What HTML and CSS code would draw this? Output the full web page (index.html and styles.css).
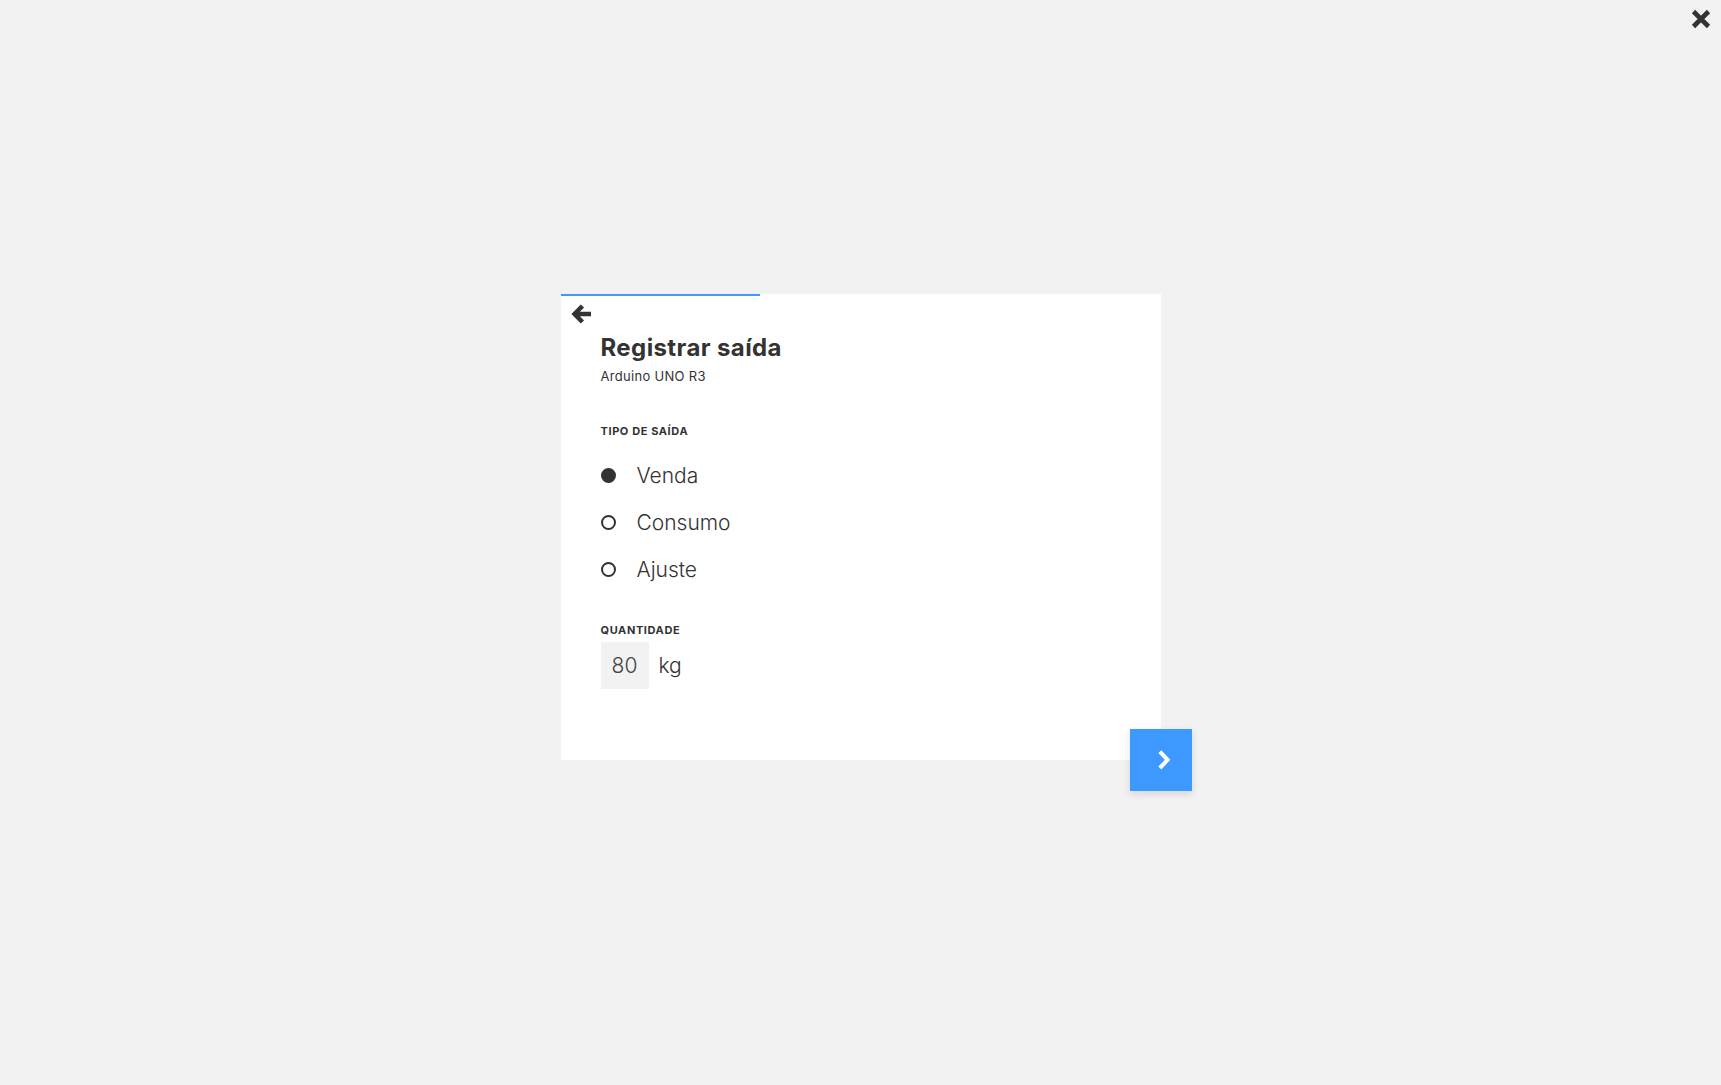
FILE: index.html
```html
<!DOCTYPE html>
<html lang="pt-BR">
<head>
<meta charset="utf-8">
<title>Registrar saída</title>
<link rel="stylesheet" href="styles.css">
</head>
<body>
<button class="close-btn" aria-label="Fechar">
  <svg width="20" height="20" viewBox="0 0 20 20"><path d="M2.5 2.5 L17.5 17.5 M17.5 2.5 L2.5 17.5" fill="none" stroke="#333" stroke-width="4.6"/></svg>
</button>
<main class="stage">
  <div class="dialog">
    <section class="card">
      <div class="progress"><div class="progress-fill" style="width:33.33%"></div></div>
      <button class="back-btn" aria-label="Voltar">
        <svg width="20" height="20" viewBox="0 0 20 20"><path d="M11.4 2 L3.6 10 L11.4 18 M4.6 10 H20" fill="none" stroke="#333" stroke-width="4.6" stroke-linejoin="miter"/></svg>
      </button>
      <div class="content">
        <h1 class="title">Registrar saída</h1>
        <p class="subtitle">Arduino UNO R3</p>
        <div class="field-label">TIPO DE SAÍDA</div>
        <ul class="radio-list">
          <li class="radio-row"><span class="radio radio-on"></span><span class="radio-text">Venda</span></li>
          <li class="radio-row"><span class="radio"></span><span class="radio-text">Consumo</span></li>
          <li class="radio-row"><span class="radio"></span><span class="radio-text">Ajuste</span></li>
        </ul>
        <div class="field-label qty-label">QUANTIDADE</div>
        <div class="qty-row">
          <div class="qty-box">80</div>
          <span class="qty-unit">kg</span>
        </div>
      </div>
    </section>
    <button class="next-btn" aria-label="Próximo">
      <svg width="14" height="22" viewBox="0 0 14 22"><path d="M2.8 2.6 L10.6 10.8 L2.8 19" fill="none" stroke="#fff" stroke-width="4" stroke-linejoin="miter"/></svg>
    </button>
  </div>
</main>
</body>
</html>
```
FILE: styles.css
```css
* { box-sizing: border-box; }
html, body {
  margin: 0;
  padding: 0;
  height: 100%;
}
body {
  background: #f2f2f2;
  font-family: Inter, Roboto, "Liberation Sans", sans-serif;
  color: #333;
  position: relative;
  overflow: hidden;
}
button {
  border: 0;
  background: none;
  padding: 0;
  cursor: pointer;
}
.close-btn {
  position: absolute;
  top: 9px;
  right: 10px;
  width: 20px;
  height: 20px;
  display: flex;
}
.stage {
  height: 100%;
  display: flex;
  align-items: center;
  justify-content: center;
}
.dialog {
  position: relative;
  width: 600px;
  margin-bottom: 31px;
}
.card {
  background: #fff;
  padding-bottom: 71px;
}
.progress {
  height: 2px;
  margin-bottom: -2px;
  position: relative;
}
.progress-fill {
  height: 2px;
  background: #3d9bff;
}
.back-btn {
  display: flex;
  width: 20px;
  height: 20px;
  margin: 10px 0 0 10px;
}
.content {
  padding: 0 40px;
}
.title {
  margin: 10px 0 0;
  font-size: 24px;
  line-height: 28px;
  font-weight: 700;
  letter-spacing: 0.4px;
  color: #333;
}
.subtitle {
  margin: 6px 0 0;
  font-size: 13px;
  line-height: 16px;
  font-weight: 400;
  letter-spacing: 0.3px;
  color: #333;
}
.field-label {
  margin-top: 40px;
  font-size: 11px;
  line-height: 14px;
  font-weight: 700;
  letter-spacing: 0.6px;
  color: #333;
}
.radio-list {
  list-style: none;
  margin: 14px 0 0;
  padding: 0;
}
.radio-row {
  height: 47px;
  display: flex;
  align-items: center;
  gap: 21px;
}
.radio {
  width: 15px;
  height: 15px;
  border-radius: 50%;
  border: 2px solid #333;
  flex: none;
}
.radio-on {
  background: #333;
}
.radio-text {
  font-size: 21px;
  line-height: 28px;
  font-weight: 300;
  color: #333;
}
.qty-label {
  margin-top: 30px;
}
.qty-row {
  margin-top: 5px;
  display: flex;
  align-items: center;
  gap: 10px;
}
.qty-box {
  width: 48px;
  height: 47px;
  background: #f2f2f2;
  display: flex;
  align-items: center;
  justify-content: center;
  font-size: 21px;
  font-weight: 300;
  color: #444;
}
.qty-unit {
  font-size: 21px;
  font-weight: 300;
  color: #333;
}
.next-btn {
  position: absolute;
  right: -31px;
  bottom: -31px;
  width: 62px;
  height: 62px;
  background: #3d99ff;
  box-shadow: 0 3px 8px rgba(0, 0, 0, 0.12);
  display: flex;
  align-items: center;
  justify-content: center;
  padding-left: 6px;
}
```
